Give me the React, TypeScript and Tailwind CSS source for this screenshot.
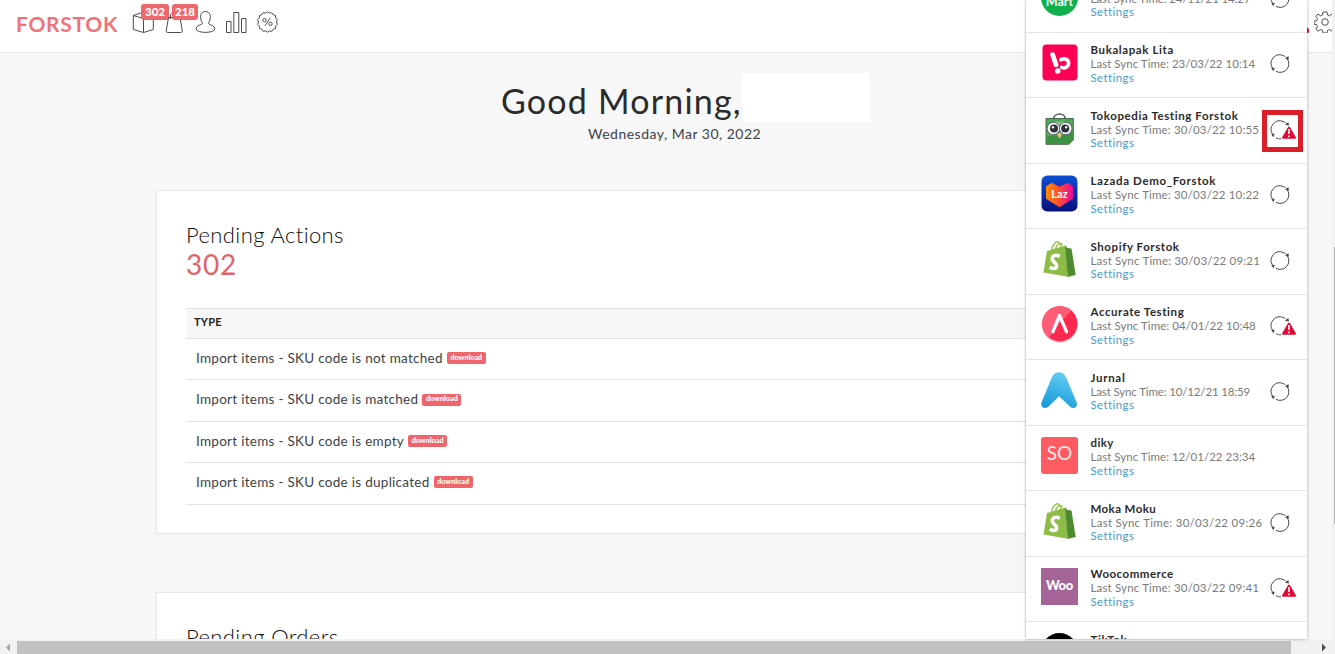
import React from "react";

type Logo = "mart" | "bukalapak" | "tokopedia" | "lazada" | "shopify" | "accurate" | "jurnal" | "so" | "woo" | "tiktok";

type Channel = {
  name: string;
  nameClass: string;
  time: string;
  timeClass: string;
  logo: Logo;
  sync: "none" | "ok" | "warn" | "marked";
};

const channels: Channel[] = [
  { name: "GrabMart", nameClass: "tracking-[0.6px]", time: "24/11/21 14:27", timeClass: "tracking-[-0.13px]", logo: "mart", sync: "ok" },
  { name: "Bukalapak Lita", nameClass: "tracking-[0.6px]", time: "23/03/22 10:14", timeClass: "tracking-[0.03px]", logo: "bukalapak", sync: "ok" },
  { name: "Tokopedia Testing Forstok", nameClass: "tracking-[0.59px]", time: "30/03/22 10:55", timeClass: "tracking-[0.16px]", logo: "tokopedia", sync: "marked" },
  { name: "Lazada Demo_Forstok", nameClass: "tracking-[0.64px]", time: "30/03/22 10:22", timeClass: "tracking-[0.16px]", logo: "lazada", sync: "ok" },
  { name: "Shopify Forstok", nameClass: "tracking-[0.58px]", time: "30/03/22 09:21", timeClass: "tracking-[0.19px]", logo: "shopify", sync: "ok" },
  { name: "Accurate Testing", nameClass: "tracking-[0.58px]", time: "04/01/22 10:48", timeClass: "tracking-[0.05px]", logo: "accurate", sync: "warn" },
  { name: "Jurnal", nameClass: "tracking-[0.7px]", time: "10/12/21 18:59", timeClass: "tracking-[-0.14px]", logo: "jurnal", sync: "ok" },
  { name: "diky", nameClass: "tracking-[0.4px]", time: "12/01/22 23:34", timeClass: "tracking-[0.03px]", logo: "so", sync: "none" },
  { name: "Moka Moku", nameClass: "tracking-[0.4px]", time: "30/03/22 09:26", timeClass: "tracking-[0.27px]", logo: "shopify", sync: "ok" },
  { name: "Woocommerce", nameClass: "tracking-[0.5px]", time: "30/03/22 09:41", timeClass: "tracking-[0.16px]", logo: "woo", sync: "warn" },
  { name: "TikTok", nameClass: "tracking-[0.6px]", time: "30/03/22 09:41", timeClass: "tracking-[0.16px]", logo: "tiktok", sync: "ok" },
];

const actions = [
  "Import items - SKU code is not matched",
  "Import items - SKU code is matched",
  "Import items - SKU code is empty",
  "Import items - SKU code is duplicated",
];

function ChannelLogo({ logo }: { logo: Logo }) {
  const box = "size-[37px] shrink-0";
  switch (logo) {
    case "mart":
      return (
        <div className={`${box} mt-px flex items-end justify-center rounded-full bg-[#0fb04b] pb-[6px] text-[12.5px] leading-[16px] font-bold text-white`}>
          Mart
        </div>
      );
    case "bukalapak":
      return (
        <svg className={box} viewBox="0 0 37 37">
          <rect x="1.5" y="0.5" width="35" height="36" rx="4" fill="#fb0054" />
          <g fill="none" stroke="#fff" strokeLinecap="round">
            <path d="M11.6 10.6l3.400 10.200" strokeWidth="4.800" />
            <path d="M19.800 15.800c3.600-2 7.600-.6 7.800 3 .2 3.600-3.200 6-7 4.600" strokeWidth="3.600" />
          </g>
          <circle cx="16.700" cy="27" r="2.800" fill="#fff" />
        </svg>
      );
    case "tokopedia":
      return (
        <svg className={box} viewBox="0 0 37 37">
          <path d="M12.500 10.500c0-7.500 12-7.500 12 0" fill="none" stroke="#4d5f58" strokeWidth="1.500" />
          <path d="M5 9.500h27.300v21.500l-4.500 4.300H5z" fill="#4fa852" stroke="#3f5f45" strokeWidth="0.900" />
          <path d="M5.500 28l26.300-5v8l-4.300 4H5.500z" fill="#3d9143" />
          <path d="M12 13.500c2.500-1.500 4.500-1.800 6.500 0 2-1.800 4-1.500 6.500 0L19.500 19h-2z" fill="#8acb7f" />
          <circle cx="12.400" cy="19.500" r="6.300" fill="#f4f6f5" stroke="#596168" strokeWidth="1" />
          <circle cx="24.700" cy="19.500" r="6.300" fill="#f4f6f5" stroke="#596168" strokeWidth="1" />
          <circle cx="13" cy="19.500" r="4" fill="#2e3238" />
          <circle cx="24.200" cy="19.500" r="4" fill="#2e3238" />
          <circle cx="12" cy="18.300" r="1.200" fill="#fff" />
          <circle cx="25.200" cy="18.300" r="1.200" fill="#fff" />
          <path d="M16 25.500l2.500-1.700 2.500 1.700-2.500 4z" fill="#eec27b" />
        </svg>
      );
    case "lazada":
      return (
        <svg className={box} viewBox="0 0 37 37">
          <defs>
            <linearGradient id="lazBg" x1="0" y1="0" x2="0" y2="1">
              <stop offset="0" stopColor="#0b4fd4" />
              <stop offset="1" stopColor="#06107e" />
            </linearGradient>
            <linearGradient id="lazHeart" x1="0" y1="0" x2="1" y2="0">
              <stop offset="0" stopColor="#ff8a00" />
              <stop offset="0.5" stopColor="#fa4a35" />
              <stop offset="1" stopColor="#ec0a9c" />
            </linearGradient>
          </defs>
          <rect x="0.500" y="0.500" width="36" height="36" rx="6" fill="url(#lazBg)" />
          <path d="M5.500 11.500l5-3.300 8 4 8-4 5 3.300v12l-13 8.300-13-8.300z" fill="url(#lazHeart)" stroke="url(#lazHeart)" strokeLinejoin="round" />
          <text x="18.500" y="22.500" textAnchor="middle" fill="#fff" className="text-[11px] font-bold">Laz</text>
        </svg>
      );
    case "shopify":
      return (
        <svg className={box} viewBox="0 0 37 37">
          <path d="M10.500 10.500c1-7 5.500-10 7.500-8 2 1.500 2 4 2 6M14.500 9.500c1-5.500 5-8 7-4.500" fill="none" stroke="#9dc45a" strokeWidth="1.500" />
          <path d="M6 11L24.500 5.500l2.200 31.200L2.500 32.500z" fill="#8dbd47" />
          <path d="M24 5.300l2.500 2.800 4 .4 4.200 26.500-8 1.900z" fill="#4f8b2e" />
          <path d="M18.700 16.300c-4.200-2.300-7.800-.3-7.400 2.900.4 3.400 4.800 3.500 4.300 7-.5 3.200-4.200 2.800-6.800.8" fill="none" stroke="#fff" strokeWidth="3.600" />
        </svg>
      );
    case "accurate":
      return (
        <svg className={box} viewBox="0 0 37 37">
          <circle cx="18.800" cy="19" r="18" fill="#d8d3d5" />
          <circle cx="18.800" cy="17.800" r="17.600" fill="#fb2950" />
          <path d="M1.200 18a17.600 17.600 0 0 1 29-13.500L18 18 8 31.500A17.600 17.600 0 0 1 1.200 18z" fill="#ff5c78" />
          <path d="M12 25.700L18.500 9.500 25.500 25.700" fill="none" stroke="#fff" strokeWidth="3.300" strokeLinecap="round" strokeLinejoin="round" />
        </svg>
      );
    case "jurnal":
      return (
        <svg className={box} viewBox="0 0 37 37">
          <defs>
            <linearGradient id="jurnalFill" x1="0.6" y1="0" x2="0.3" y2="1">
              <stop offset="0" stopColor="#64cdf5" />
              <stop offset="1" stopColor="#189ad8" />
            </linearGradient>
          </defs>
          <path d="M11 6C13.500 -.5 22.500 -.5 25 6l10.700 25.500c1.500 4.500-3 7-6.200 4.500L18 25.300 7 36c-3.500 2.500-8 0-6.500-4.500z" fill="url(#jurnalFill)" />
        </svg>
      );
    case "so":
      return <div className={`${box} flex items-center justify-center rounded-[3px] bg-[#fd5c63] pb-[3px] text-[19px] text-white/85`}>SO</div>;
    case "woo":
      return <div className={`${box} flex items-center justify-center bg-[#a46497] text-[13px] font-black tracking-[-0.3px] text-white`}>Woo</div>;
    default:
      return <div className={`${box} rounded-full bg-black`} />;
  }
}

function SyncIcon({ warn }: { warn: boolean }) {
  return (
    <svg className="h-[22px] w-[27px] shrink-0" viewBox="0 0 27 22">
      <g fill="none" stroke="#4a4a4a" strokeWidth="1">
        <path d="M2.800 15.500A8.600 8.600 0 0 1 13.500 2.700" />
        {warn ? <path d="M6 18.700c1.500.9 3 1.200 5 1.100" /> : <path d="M6 18.300A8.600 8.600 0 0 0 17 5.500" />}
        <path d="M13.500 2.700c1.500.4 2.600 1.100 3.500 2.300" strokeDasharray="2 1.500" />
      </g>
      <path d="M15 5.700l3.300-2.700.7 3.500zM1.200 15.200l3.600-.4-1.300 3.400z" fill="#4a4a4a" />
      {warn && (
        <>
          <path d="M19 8.500l6 10.300H13z" fill="#df0a35" stroke="#df0a35" strokeWidth="2" strokeLinejoin="round" />
          <path d="M19 10v5M19 16.500v1.800" stroke="#fff" strokeWidth="1.600" />
        </>
      )}
    </svg>
  );
}

function ChannelRow({ channel }: { channel: Channel }) {
  return (
    <div className="relative flex h-[65.5px] shrink-0 border-b border-[#e4e4e4] pt-[10px] pl-[15px]">
      <div className="pt-px">
        <ChannelLogo logo={channel.logo} />
      </div>
      <div className="ml-[12.5px] w-[179.5px] pt-[0.5px] text-[11.5px] leading-[14px] whitespace-nowrap">
        <div className={`font-bold text-[#2b2b2b] ${channel.nameClass}`}>{channel.name}</div>
        <div className={`text-[#7b7b7b] ${channel.timeClass}`}>Last Sync Time: {channel.time}</div>
        <div className="-mt-[0.5px] tracking-[0.4px] text-[#4a9bcb]">Settings</div>
      </div>
      {channel.sync !== "none" && (
        <div className="pt-[10.5px]">
          <SyncIcon warn={channel.sync !== "ok"} />
        </div>
      )}
      {channel.sync === "marked" && <div className="absolute top-[12px] left-[236px] h-[42px] w-[41px] border-[5px] border-[#db1f29]" />}
    </div>
  );
}

function Header() {
  return (
    <header className="flex h-[53px] shrink-0 border-b border-[#e6e6e6] bg-white">
      <div className="w-[132px] pt-[10px] pl-[16px] text-[21px] leading-[27px] font-bold tracking-[0.7px] text-[#ee7479]">FORSTOK</div>
      <nav className="flex flex-1 gap-[9px] pt-[11px] text-[#4c4c4c]">
        <div className="relative">
          <svg className="size-[22px]" viewBox="0 0 22 22" fill="none" stroke="currentColor">
            <path d="M1.300 4.500L11.500 1l9.800 3.500v14l-9.800 3-10.200-3zM1.300 4.500l10.200 3 9.800-3M11.500 7.500v14" />
          </svg>
          <span className="absolute -top-[7px] left-[9px] flex h-[16px] w-[28px] items-center justify-center rounded-[3px] bg-[#ed686d] pb-px text-[11.5px] font-black text-white">302</span>
        </div>
        <div className="relative">
          <svg className="size-[22px]" viewBox="0 0 22 22" fill="none" stroke="currentColor">
            <path d="M5.500 6.500h11.500l2.300 13.500c0 1-.6 1.500-1.500 1.500H4.700c-1 0-1.600-.5-1.500-1.500zM7.500 8V5c0-5 7-5 7 0v3" />
          </svg>
          <span className="absolute -top-[7px] left-[9px] flex h-[16px] w-[26px] items-center justify-center rounded-[3px] bg-[#ed686d] pb-px text-[11.5px] font-black text-white">218</span>
        </div>
        <svg className="size-[22px]" viewBox="0 0 22 22" fill="none" stroke="currentColor">
          <path d="M8.500 12C6.800 10 6 6 7 3.500c1.300-4 7.700-4 9 0 .8 2.500.2 6.500-1.500 8.500 0 1.200.8 1.500 3 2.200 2.300.8 3.500 2.500 3.300 3.800-.6 4.500-18 4.500-18.600 0-.3-1.500 1-3.200 3.300-4 2.200-.7 3-1 3-2z" />
        </svg>
        <svg className="size-[22px]" viewBox="0 0 22 22" fill="none" stroke="currentColor">
          <path d="M1.500 10.500h4.500v11H1.500zM8.800 1.500h5v20h-5zM16.500 7.500h4.500v14h-4.500z" />
        </svg>
        <svg className="size-[22px]" viewBox="0 0 22 22" fill="none" stroke="currentColor">
          <path d="M11.500 .8l2 1.300 2.400-.4 1.300 2 2.300.8.1 2.400 1.700 1.700-.7 2.400.7 2.400-1.700 1.700-.1 2.400-2.300.8-1.300 2-2.400-.4-2 1.300-2-1.300-2.400.4-1.300-2-2.300-.8-.1-2.400L1.700 13.400l.7-2.400-.7-2.400 1.700-1.700.1-2.400 2.300-.8 1.300-2 2.400.4z" />
          <circle cx="8.500" cy="9.200" r="1.700" />
          <circle cx="14.500" cy="12.800" r="1.700" />
          <path d="M14 7.200l-5 7.600" />
        </svg>
      </nav>
      <div className="relative mt-[11px] h-[22px] w-[28px]">
        <span className="absolute top-[17px] -left-px h-[5px] w-[3px] rounded-sm bg-[#d8123a]" />
        <svg className="ml-[6.5px] size-[22px]" viewBox="0 0 22 22" fill="none" stroke="#4c4c4c">
          <circle cx="11" cy="11" r="3.300" />
          <path d="M9 1h4l.5 3 2 .8L18 3l2 2.300-1.500 2.500.8 2 2.700.4v3l-2.700.5-.8 2L20 18l-2 2.200-2.500-1.700-2 .8-.5 2.700H9l-.5-2.700-2-.8L4 20.200 1.800 18l1.700-2.300-.8-2L0 13.200v-3l2.700-.5.8-2L1.800 5.300 4 3l2.500 1.800 2-.8z" />
        </svg>
      </div>
    </header>
  );
}

export default function App() {
  return (
    <div className="relative flex h-[654px] w-full flex-col overflow-hidden bg-[#f7f7f7] font-['Lato','Noto_Sans',sans-serif] text-[#3d4247]">
      <Header />

      <main className="min-h-0 flex-1 overflow-hidden">
        <div className="mt-[20px] flex h-[49px] items-start pl-[501px]">
          <h1 className="w-[241px] pt-[5px] text-[34px] leading-[46px] tracking-[1.2px] whitespace-nowrap text-[#2b2b2b]">Good Morning,</h1>
          <div className="h-[49px] w-[128px] bg-white" />
        </div>
        <p className="pt-[2px] pl-[588px] text-[14px] leading-[20px] tracking-[0.49px]">Wednesday, Mar 30, 2022</p>

        <section className="mt-[46px] mr-[120px] ml-[156px] h-[344px] border border-[#e6e6e6] bg-white pt-[31px] pl-[29px]">
          <h2 className="text-[22px] leading-[26px] font-light tracking-[0.4px] text-[#0c0e10]">Pending Actions</h2>
          <p className="text-[28px] leading-[32px] tracking-[0.8px] text-[#e2646a]">302</p>
          <div className="mt-[28px] h-[31px] border-y border-[#e2e2e2] bg-[#f7f7f7] pl-[8px] text-[11px] leading-[26px] font-bold tracking-[0.2px] text-[#222]">TYPE</div>
          {actions.map((label) => (
            <div key={label} className="flex h-[41.4px] items-center border-b border-[#e2e2e2] pb-[2px] pl-[10px]">
              <span className="text-[13.5px] tracking-[0.28px]">{label}</span>
              <span className="ml-[4px] flex h-[12px] w-[39px] items-center justify-center rounded-[2px] bg-[#ee666c] text-[7.2px] font-black text-white">download</span>
            </div>
          ))}
        </section>

        <section className="mt-[58px] mr-[120px] ml-[156px] h-[200px] border border-[#e6e6e6] bg-white pt-[31px] pl-[29px]">
          <h2 className="text-[22px] leading-[26px] font-light tracking-[0.4px] text-[#0c0e10]">Pending Orders</h2>
        </section>
      </main>

      <aside className="absolute top-0 left-[1026px] flex h-[639px] w-[281px] flex-col overflow-hidden bg-white shadow-[0_0_3px_rgba(0,0,0,0.35)]">
        <div className="-mt-[33px] flex flex-col">
          {channels.map((channel) => (
            <ChannelRow key={channel.name} channel={channel} />
          ))}
        </div>
      </aside>

      <div className="absolute top-0 right-0 h-[639px] w-[3px] bg-[#f1f1f1] pt-[247px] pl-[2px]">
        <div className="h-[277px] bg-[#b5b5b5]" />
      </div>

      <footer className="flex h-[15px] shrink-0 items-center bg-[#f1f1f1] pt-[2px]">
        <svg className="h-[13px] w-[17px]" viewBox="0 0 17 13">
          <path d="M6 6.500l4-4v8z" fill="#a3a3a3" />
        </svg>
        <div className="h-full w-[1274px] bg-[#c1c1c1]" />
        <svg className="ml-[24px] h-[13px] w-[17px]" viewBox="0 0 17 13">
          <path d="M11 6.500l-4-4v8z" fill="#505050" />
        </svg>
      </footer>
    </div>
  );
}
